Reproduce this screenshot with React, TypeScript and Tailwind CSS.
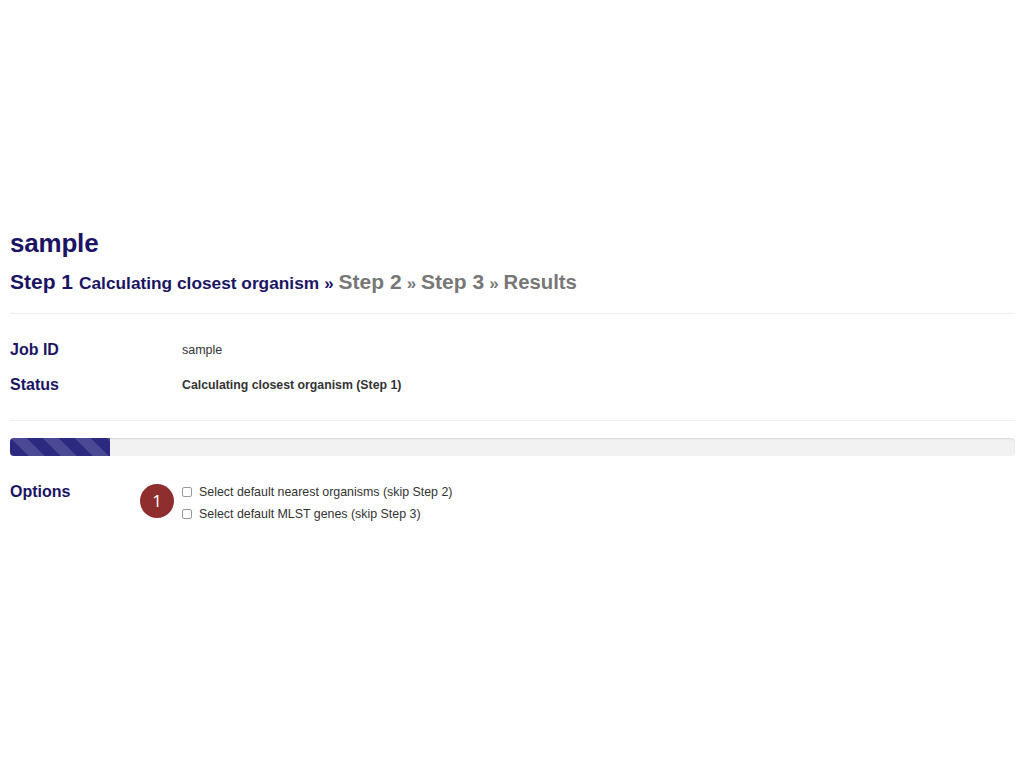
import React from "react";

export default function App() {
  const font = { fontFamily: '"Liberation Sans", Arial, Helvetica, sans-serif' };
  return (
    <div className="min-h-[768px] w-[1024px] bg-white text-[#333]" style={font}>
      <div className="relative px-[10px] pt-[228px] pr-[9px]">
        <h2 className="h-[30px] text-[26px] leading-[30px] font-bold text-[#1b1464] tracking-[-0.2px]">sample</h2>
        <h3 className="mt-[10px] h-[28px] flex items-baseline whitespace-nowrap leading-[28px] font-bold">
          <span className="text-[21px] text-[#1b1464]">Step 1</span>
          <span className="ml-[6px] text-[17.3px] text-[#1b1464]">Calculating closest organism</span>
          <span className="ml-[5px] text-[17px] text-[#1b1464]">»</span>
          <span className="ml-[5px] text-[21px] text-[#777]">Step 2</span>
          <span className="ml-[5px] text-[17px] text-[#777]">»</span>
          <span className="ml-[5px] text-[21px] text-[#777]">Step 3</span>
          <span className="ml-[5px] text-[17px] text-[#777]">»</span>
          <span className="ml-[5px] text-[20.3px] text-[#777]">Results</span>
        </h3>
        <div className="mt-[17px] h-px bg-[#eeeeee]" />
        <div className="mt-[25px] flex flex-col gap-[13px]">
          <div className="flex items-center h-[22px]">
            <div className="w-[172px] text-[16px] font-bold text-[#1b1464]">Job ID</div>
            <div className="text-[12.5px] text-[#333]">sample</div>
          </div>
          <div className="flex items-center h-[22px]">
            <div className="w-[172px] text-[16px] font-bold text-[#1b1464]">Status</div>
            <div className="text-[12.3px] font-bold text-[#333]">Calculating closest organism (Step 1)</div>
          </div>
        </div>
        <div className="mt-[24px] h-px bg-[#eeeeee]" />
        <div className="mt-[17px] h-[18px] rounded-[4px] bg-[#f2f2f2] shadow-[inset_0_1px_2px_rgba(0,0,0,0.1)] overflow-hidden">
          <div
            className="h-full w-[100px] bg-[#2c2980]"
            style={{
              backgroundImage:
                "linear-gradient(45deg, rgba(255,255,255,0.15) 25%, transparent 25%, transparent 50%, rgba(255,255,255,0.15) 50%, rgba(255,255,255,0.15) 75%, transparent 75%, transparent)",
              backgroundSize: "32px 32px",
            }}
          />
        </div>
        <div className="mt-[25px] flex items-start">
          <div className="w-[172px] text-[16px] leading-[22px] font-bold text-[#1b1464]">Options</div>
          <div className="flex flex-col pt-[1px]">
            <label className="flex items-center h-[20px] gap-[7px] text-[12.4px] text-[#333]">
              <span className="h-[10px] w-[10px] rounded-[2px] border border-[#9a9a9a] bg-white" />
              Select default nearest organisms (skip Step 2)
            </label>
            <label className="mt-[2px] flex items-center h-[20px] gap-[7px] text-[12.4px] text-[#333]">
              <span className="h-[10px] w-[10px] rounded-[2px] border border-[#9a9a9a] bg-white" />
              Select default MLST genes (skip Step 3)
            </label>
          </div>
        </div>
        <div className="absolute left-[140px] top-[484px] flex h-[34px] w-[34px] items-center justify-center rounded-full bg-[#8e2e2e] text-[17px] text-white" style={{ fontFamily: '"Open Sans", "Liberation Sans", sans-serif' }}>
          1
        </div>
      </div>
    </div>
  );
}
